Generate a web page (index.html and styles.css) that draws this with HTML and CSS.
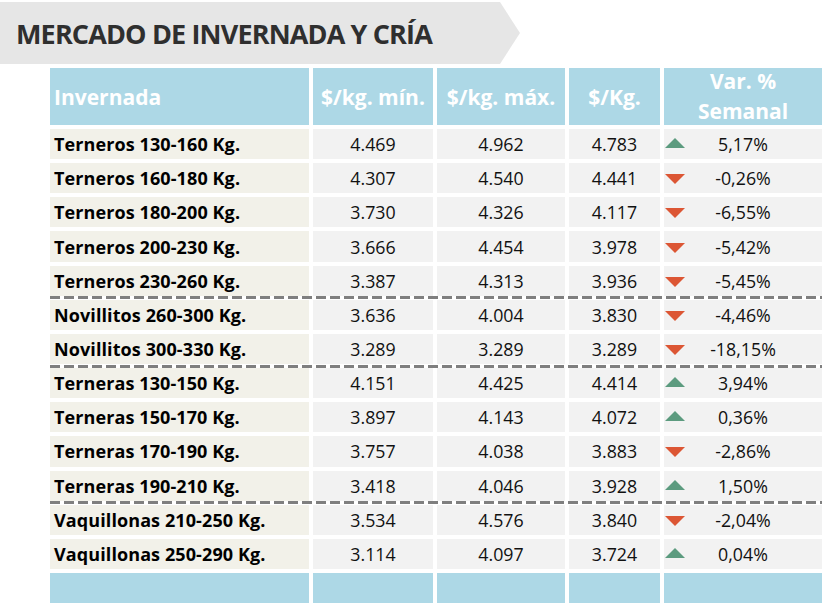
FILE: index.html
```html
<!DOCTYPE html>
<html lang="es">
<head>
<meta charset="utf-8">
<title>Mercado de Invernada y Cría</title>
<link rel="stylesheet" href="styles.css">
</head>
<body>
<div class="page">
  <div class="banner"><h1 class="title">MERCADO DE INVERNADA Y CRÍA</h1></div>
  <div class="table">
    <div class="row head">
      <div class="cell name">Invernada</div>
      <div class="cell">$/kg. mín.</div>
      <div class="cell">$/kg. máx.</div>
      <div class="cell">$/Kg.</div>
      <div class="cell var">Var. %<br>Semanal</div>
    </div>
    <div class="row body"><div class="cell name">Terneros 130-160 Kg.</div><div class="cell">4.469</div><div class="cell">4.962</div><div class="cell">4.783</div><div class="cell pct"><span class="tri up"></span><span class="val">5,17%</span></div></div>
    <div class="row body"><div class="cell name">Terneros 160-180 Kg.</div><div class="cell">4.307</div><div class="cell">4.540</div><div class="cell">4.441</div><div class="cell pct"><span class="tri down"></span><span class="val">-0,26%</span></div></div>
    <div class="row body"><div class="cell name">Terneros 180-200 Kg.</div><div class="cell">3.730</div><div class="cell">4.326</div><div class="cell">4.117</div><div class="cell pct"><span class="tri down"></span><span class="val">-6,55%</span></div></div>
    <div class="row body"><div class="cell name">Terneros 200-230 Kg.</div><div class="cell">3.666</div><div class="cell">4.454</div><div class="cell">3.978</div><div class="cell pct"><span class="tri down"></span><span class="val">-5,42%</span></div></div>
    <div class="row body"><div class="cell name">Terneros 230-260 Kg.</div><div class="cell">3.387</div><div class="cell">4.313</div><div class="cell">3.936</div><div class="cell pct"><span class="tri down"></span><span class="val">-5,45%</span></div></div>
    <div class="sep"></div>
    <div class="row body"><div class="cell name">Novillitos 260-300 Kg.</div><div class="cell">3.636</div><div class="cell">4.004</div><div class="cell">3.830</div><div class="cell pct"><span class="tri down"></span><span class="val">-4,46%</span></div></div>
    <div class="row body"><div class="cell name">Novillitos 300-330 Kg.</div><div class="cell">3.289</div><div class="cell">3.289</div><div class="cell">3.289</div><div class="cell pct"><span class="tri down"></span><span class="val">-18,15%</span></div></div>
    <div class="sep"></div>
    <div class="row body"><div class="cell name">Terneras 130-150 Kg.</div><div class="cell">4.151</div><div class="cell">4.425</div><div class="cell">4.414</div><div class="cell pct"><span class="tri up"></span><span class="val">3,94%</span></div></div>
    <div class="row body"><div class="cell name">Terneras 150-170 Kg.</div><div class="cell">3.897</div><div class="cell">4.143</div><div class="cell">4.072</div><div class="cell pct"><span class="tri up"></span><span class="val">0,36%</span></div></div>
    <div class="row body"><div class="cell name">Terneras 170-190 Kg.</div><div class="cell">3.757</div><div class="cell">4.038</div><div class="cell">3.883</div><div class="cell pct"><span class="tri down"></span><span class="val">-2,86%</span></div></div>
    <div class="row body"><div class="cell name">Terneras 190-210 Kg.</div><div class="cell">3.418</div><div class="cell">4.046</div><div class="cell">3.928</div><div class="cell pct"><span class="tri up"></span><span class="val">1,50%</span></div></div>
    <div class="sep"></div>
    <div class="row body"><div class="cell name">Vaquillonas 210-250 Kg.</div><div class="cell">3.534</div><div class="cell">4.576</div><div class="cell">3.840</div><div class="cell pct"><span class="tri down"></span><span class="val">-2,04%</span></div></div>
    <div class="row body"><div class="cell name">Vaquillonas 250-290 Kg.</div><div class="cell">3.114</div><div class="cell">4.097</div><div class="cell">3.724</div><div class="cell pct"><span class="tri up"></span><span class="val">0,04%</span></div></div>
    <div class="row foot"><div class="cell"></div><div class="cell"></div><div class="cell"></div><div class="cell"></div><div class="cell"></div></div>
  </div>
</div>
</body>
</html>
```

FILE: styles.css
```css
* { box-sizing: border-box; }
html, body { margin: 0; padding: 0; background: #ffffff; }
body {
  font-family: "Open Sans", "Noto Sans", "Liberation Sans", sans-serif;
  color: #111;
  width: 829px;
  height: 608px;
  overflow: hidden;
}
.page {
  padding-top: 2px;
}
.banner {
  width: 520px;
  height: 62px;
  background: #e6e6e6;
  clip-path: polygon(0 0, 500px 0, 520px 31px, 500px 62px, 0 62px);
  display: flex;
  align-items: center;
  padding-left: 16px;
}
.title {
  margin: 0;
  font-size: 27px;
  font-weight: 700;
  color: #2f2f2f;
  letter-spacing: -0.85px;
  line-height: 1;
  padding-top: 1px;
}
.table {
  margin: 4px 0 0 50px;
  width: 772px;
  display: flex;
  flex-direction: column;
}
.row {
  display: grid;
  grid-template-columns: 259px 120px 128px 91px 158px;
  column-gap: 4px;
}
.row + .row { margin-top: 4px; }
.sep {
  height: 4px;
  display: flex;
  align-items: center;
}
.sep::before {
  content: "";
  display: block;
  width: 100%;
  height: 3px;
  background: repeating-linear-gradient(to right, #7f7f7f 0 10px, transparent 10px 14px);
}
.cell {
  display: flex;
  align-items: center;
  justify-content: center;
  text-align: center;
}
.head .cell {
  height: 57px;
  background: #add8e6;
  color: #ffffff;
  font-weight: 700;
  font-size: 21px;
  line-height: 30px;
}
.head .name { justify-content: flex-start; padding-left: 4px; }
.head .var { line-height: 30px; padding-bottom: 1px; }
.body .cell {
  height: 30.17px;
  background: #f2f2f2;
  font-size: 17.8px;
  color: #111;
}
.body .name {
  background: #f2f1e9;
  justify-content: flex-start;
  padding-left: 4px;
  font-weight: 700;
  font-size: 18px;
  letter-spacing: 0.1px;
  color: #000;
}
.body .pct {
  display: grid;
  grid-template-columns: 1fr auto 1fr;
  align-items: center;
}
.tri {
  grid-column: 1;
  grid-row: 1;
  justify-self: start;
  margin-left: 1px;
  width: 0;
  height: 0;
  border-left: 10px solid transparent;
  border-right: 10px solid transparent;
}
.tri.up { border-bottom: 10px solid #5c9b7f; margin-top: -2px; }
.tri.down { border-top: 10px solid #dc5634; margin-top: 2px; }
.val { grid-column: 2; grid-row: 1; }
.foot .cell {
  height: 30px;
  background: #add8e6;
}
```
